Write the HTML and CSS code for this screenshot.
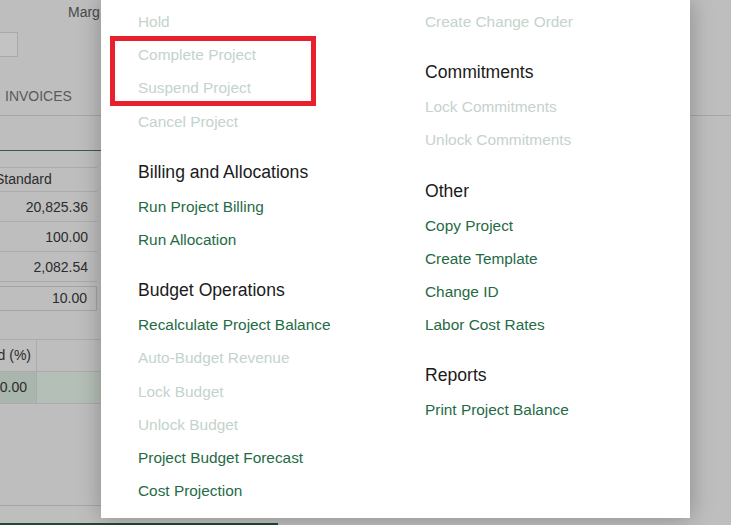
FILE: index.html
```html
<!DOCTYPE html>
<html lang="en">
<head>
<meta charset="utf-8">
<title>Project Actions</title>
<link rel="stylesheet" href="styles.css">
</head>
<body>
<div class="page">
  <div class="hdr"><span class="lbl">Marg</span></div>
  <div class="field"></div>
  <div class="tabs"><span class="tab">INVOICES</span></div>
  <div class="green-rule"></div>
  <div class="tbl">
    <div class="th">Standard</div>
    <div class="td">20,825.36</div>
    <div class="td">100.00</div>
    <div class="td">2,082.54</div>
    <div class="inp">10.00</div>
  </div>
  <div class="tbl2">
    <div class="row head"><div class="c1"><span>d (%)</span></div><div class="c2"></div></div>
    <div class="row sel"><div class="c1"><span>0.00</span></div><div class="c2"></div></div>
  </div>
  <div class="rule"></div>
  <div class="green-bottom"></div>
</div>

<div class="modal">
  <div class="cols">
    <div class="col">
      <div class="section">
        <div class="item off">Hold</div>
        <div class="item off">Complete Project</div>
        <div class="item off">Suspend Project</div>
        <div class="item off">Cancel Project</div>
      </div>
      <div class="section">
        <div class="sh">Billing and Allocations</div>
        <div class="item">Run Project Billing</div>
        <div class="item">Run Allocation</div>
      </div>
      <div class="section">
        <div class="sh">Budget Operations</div>
        <div class="item">Recalculate Project Balance</div>
        <div class="item off">Auto-Budget Revenue</div>
        <div class="item off">Lock Budget</div>
        <div class="item off">Unlock Budget</div>
        <div class="item">Project Budget Forecast</div>
        <div class="item">Cost Projection</div>
      </div>
    </div>
    <div class="col">
      <div class="section">
        <div class="item off">Create Change Order</div>
      </div>
      <div class="section">
        <div class="sh">Commitments</div>
        <div class="item off">Lock Commitments</div>
        <div class="item off">Unlock Commitments</div>
      </div>
      <div class="section">
        <div class="sh">Other</div>
        <div class="item">Copy Project</div>
        <div class="item">Create Template</div>
        <div class="item">Change ID</div>
        <div class="item">Labor Cost Rates</div>
      </div>
      <div class="section">
        <div class="sh">Reports</div>
        <div class="item">Print Project Balance</div>
      </div>
    </div>
  </div>
  <div class="highlight"></div>
</div>
</body>
</html>
```

FILE: styles.css
```css
* { box-sizing: border-box; }
html, body {
  margin: 0;
  padding: 0;
  width: 731px;
  height: 525px;
  overflow: hidden;
  background: #bebebe;
  font-family: "Liberation Sans", Arial, sans-serif;
}
.page {
  position: relative;
  width: 731px;
  height: 525px;
  font-size: 14px;
  color: #3a3a3a;
}
.hdr {
  height: 24px;
  line-height: 24px;
  padding-left: 68px;
}
.lbl { color: #4a4a4a; }
.field {
  margin-top: 8px;
  margin-left: -10px;
  width: 28px;
  height: 25px;
  border: 1px solid #a9a9a9;
  background: #c3c3c3;
}
.tabs {
  height: 59px;
  display: flex;
  align-items: flex-end;
  padding: 0 0 9px 5px;
  line-height: 20px;
  border-bottom: 1px solid #a6a6a6;
}
.tab { color: #5a5a5a; }
.green-rule {
  margin-top: 34px;
  width: 101px;
  height: 1px;
  background: #3b5a4a;
}
.tbl {
  margin-top: 16px;
  width: 97px;
  border-top: 1px solid #ababab;
}
.th {
  height: 24px;
  line-height: 23px;
  text-indent: -5px;
  color: #2c2c2c;
  border-bottom: 1px solid #ababab;
}
.td {
  height: 30px;
  line-height: 31px;
  text-align: right;
  padding-right: 9px;
  color: #2c2c2c;
  border-bottom: 1px solid #ababab;
}
.inp {
  margin-top: 4px;
  margin-left: -10px;
  width: 107px;
  height: 25px;
  line-height: 23px;
  text-align: right;
  padding-right: 9px;
  color: #2c2c2c;
  border: 1px solid #a4a4a4;
}
.tbl2 {
  margin-top: 28px;
  width: 101px;
  border-top: 1px solid #ababab;
}
.row {
  display: flex;
  height: 32px;
  border-bottom: 1px solid #ababab;
}
.c1 {
  width: 37px;
  flex: none;
  display: flex;
  justify-content: flex-end;
  white-space: nowrap;
  overflow: hidden;
  border-right: 1px solid #ababab;
  line-height: 31px;
  color: #2c2c2c;
}
.c1 span { flex: none; }
.head .c1 { padding-right: 5px; }
.sel .c1 { padding-right: 9px; background: #a9b6ad; }
.c2 { flex: 1; }
.sel .c2 { background: #b4bfb7; }
.rule {
  margin-top: 101px;
  width: 101px;
  height: 1px;
  background: #a6a6a6;
}
.green-bottom {
  margin-top: 17px;
  width: 278px;
  height: 2px;
  background: #1f4a33;
}

.modal {
  position: absolute;
  left: 101px;
  top: 0;
  width: 589px;
  height: 518px;
  background: #ffffff;
  box-shadow: 0 0 22px rgba(0, 0, 0, 0.28);
}
.cols {
  display: grid;
  grid-template-columns: 287px 1fr;
  padding: 5px 0 0 37px;
}
.section + .section { margin-top: 17px; }
.sh {
  line-height: 35px;
  height: 35px;
  font-size: 17.6px;
  color: #1b1b1b;
}
.item {
  height: 33.2px;
  line-height: 33.2px;
  font-size: 15.4px;
  color: #1f6b45;
  white-space: nowrap;
}
.item.off { color: #c4d3cb; }
.highlight {
  position: absolute;
  left: 9px;
  top: 36px;
  width: 206px;
  height: 70px;
  border: 5px solid #e8202b;
}
```
